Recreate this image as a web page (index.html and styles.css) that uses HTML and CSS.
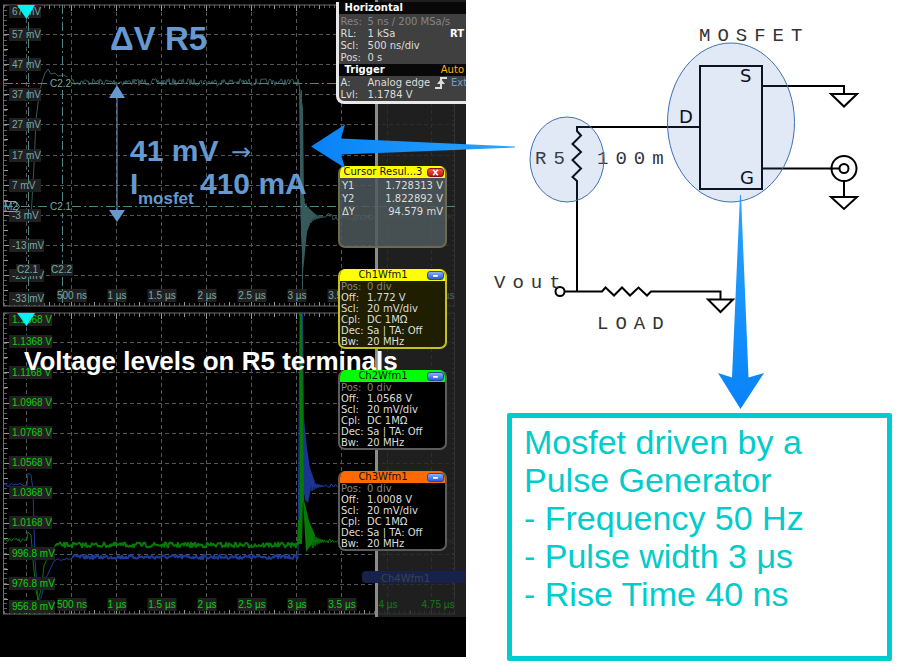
FILE: index.html
```html
<!DOCTYPE html>
<html lang="en">
<head>
<meta charset="utf-8">
<title>Mosfet pulse measurement</title>
<link rel="stylesheet" href="styles.css">
</head>
<body>
<main class="page">
  <section class="scope" aria-label="Oscilloscope">
    <svg class="scope-plots" viewBox="0 0 466 657">
      <rect class="screen" width="466" height="657"/>
      <g id="grids"></g>
      <g id="traces"></g>
      <rect class="shade" x="378" y="0" width="88" height="617"/>
      <rect class="divider" x="375" y="0" width="3" height="617"/>
      <g class="ghost">
        <rect x="362" y="571" width="110" height="12" rx="4"/>
        <text x="381" y="582">Ch4Wfm1</text>
      </g>
      <g id="axis-labels"></g>
      <g class="cursors">
        <path d="M28.500 5V306M62.500 5V306"/>
        <path d="M4 83.500H455M4 206.500H455"/>
      </g>
      <g class="cursor-tags">
        <rect class="tag-bg" x="48" y="77" width="23" height="13"/><text x="50" y="87">C2.2</text>
        <rect class="tag-bg" x="48" y="201" width="23" height="12"/><text x="50" y="210">C2.1</text>
        <rect class="chip" x="16" y="264" width="24" height="12"/><text x="17" y="273">C2.1</text>
        <rect class="chip" x="51" y="264" width="22" height="12"/><text x="51" y="273">C2.2</text>
        <path class="channel-tag" d="M4 201.500H16L19.500 206.500L16 211.500H4"/><text x="4" y="210">M2</text>
      </g>
      <path class="marker" d="M17 5H35L26.500 19Z"/>
      <path class="marker" d="M17 313H35L26.500 326Z"/>
      <g class="notes">
        <path class="span-line" d="M117 94V212"/>
        <path d="M117 85L125 98H109ZM117 222L125 210H109Z"/>
        <text class="note-title" x="110" y="50">ΔV R5</text>
        <text class="note" x="130" y="161">41 mV</text>
        <text class="note-arrow" x="231" y="160">→</text>
        <text class="note" x="130" y="194">I</text>
        <text class="note-sub" x="138" y="204">mosfet</text>
        <text class="note" x="200" y="194">410 mA</text>
      </g>
      <text class="caption" x="24" y="370">Voltage levels on R5 terminals</text>
    </svg>

    <div class="setup">
      <h2>Horizontal</h2>
      <dl class="values">
        <dt class="dim">Res:</dt><dd class="dim">5 ns / 200 MSa/s</dd>
        <dt>RL:</dt><dd class="split"><span>1 kSa</span><b>RT</b></dd>
        <dt>Scl:</dt><dd>500 ns/div</dd>
        <dt>Pos:</dt><dd>0 s</dd>
      </dl>
      <h2 class="split"><span>Trigger</span><span class="auto">Auto</span></h2>
      <dl class="values trigger">
        <dt>A:</dt><dd class="split"><span>Analog edge</span><svg class="edge" viewBox="0 0 12 12"><path d="M0 11H6V1H12"/><path class="edge-head" d="M2 7L6 2L10 7Z"/></svg><span class="ext">Ext</span></dd>
        <dt>Lvl:</dt><dd>1.1784 V</dd>
      </dl>
    </div>

    <div class="panels">
      <article class="panel cursor">
        <header><h3>Cursor Resul...3</h3><button class="close" type="button" aria-label="Close"><svg viewBox="0 0 16 9"><path d="M5 1L11 8M11 1L5 8"/></svg></button></header>
        <dl class="results">
          <dt>Y1</dt><dd>1.728313 V</dd>
          <dt>Y2</dt><dd>1.822892 V</dd>
          <dt>ΔY</dt><dd>94.579 mV</dd>
        </dl>
      </article>
      <article class="panel ch1">
        <header><h3>Ch1Wfm1</h3><button type="button" aria-label="Minimise"><svg viewBox="0 0 16 9"><path d="M5 5H11"/></svg></button></header>
        <dl class="values">
          <dt class="dim">Pos:</dt><dd class="dim">0 div</dd><dt>Off:</dt><dd>1.772 V</dd><dt>Scl:</dt><dd>20 mV/div</dd><dt>Cpl:</dt><dd>DC 1MΩ</dd><dt>Dec:</dt><dd>Sa | TA: Off</dd><dt>Bw:</dt><dd>20 MHz</dd>
        </dl>
      </article>
      <article class="panel ch2">
        <header><h3>Ch2Wfm1</h3><button type="button" aria-label="Minimise"><svg viewBox="0 0 16 9"><path d="M5 5H11"/></svg></button></header>
        <dl class="values">
          <dt class="dim">Pos:</dt><dd class="dim">0 div</dd><dt>Off:</dt><dd>1.0568 V</dd><dt>Scl:</dt><dd>20 mV/div</dd><dt>Cpl:</dt><dd>DC 1MΩ</dd><dt>Dec:</dt><dd>Sa | TA: Off</dd><dt>Bw:</dt><dd>20 MHz</dd>
        </dl>
      </article>
      <article class="panel ch3">
        <header><h3>Ch3Wfm1</h3><button type="button" aria-label="Minimise"><svg viewBox="0 0 16 9"><path d="M5 5H11"/></svg></button></header>
        <dl class="values">
          <dt class="dim">Pos:</dt><dd class="dim">0 div</dd><dt>Off:</dt><dd>1.0008 V</dd><dt>Scl:</dt><dd>20 mV/div</dd><dt>Cpl:</dt><dd>DC 1MΩ</dd><dt>Dec:</dt><dd>Sa | TA: Off</dd><dt>Bw:</dt><dd>20 MHz</dd>
        </dl>
      </article>
    </div>
  </section>

  <section class="circuit" aria-label="Circuit">
    <svg class="schematic" viewBox="466 0 434 413">
      <g class="wires">
        <rect x="700" y="66" width="62" height="123"/>
        <path d="M700 127H577V131L581 135.500L572.500 144L581 152L572.500 160L581 168.500L572.500 177L577 181V291.500"/>
        <path d="M564.500 291.500H602L605.500 287.500L614 295.500L622 287.500L630 295.500L638.500 287.500L647 295.500L651 291.500H720.500V299"/>
        <circle cx="560" cy="291.500" r="4.500"/>
        <path d="M708 299.500H733L720.500 312Z"/>
        <path d="M762 86H844V94M831 94H857L844 106.500Z"/>
        <path d="M762 168.500H840M844 181V197M831 197H857L844 209Z"/>
        <circle cx="844" cy="168.500" r="12.500"/>
        <circle cx="844" cy="168.500" r="4.500"/>
      </g>
      <g class="pins">
        <text x="740" y="82">S</text><text x="679" y="123">D</text><text x="740" y="184">G</text>
      </g>
      <g class="names">
        <text x="699" y="41">MOSFET</text>
        <text x="535" y="164">R5</text>
        <text x="597" y="164">100m</text>
        <text x="494" y="288">Vout</text>
        <text x="597" y="329">LOAD</text>
      </g>
      <g class="highlights">
        <ellipse cx="567" cy="159.500" rx="37" ry="42.500"/>
        <ellipse cx="731" cy="122.500" rx="63.500" ry="79.500"/>
      </g>
    </svg>
    <div class="summary">
      <p>Mosfet driven by a Pulse Generator</p>
      <ul>
        <li>- Frequency 50 Hz</li>
        <li>- Pulse width 3 μs</li>
        <li>- Rise Time 40 ns</li>
      </ul>
    </div>
  </section>

  <svg class="arrows" viewBox="0 0 900 668" aria-hidden="true">
    <defs>
      <linearGradient id="down" x1="0" y1="0" x2="0" y2="1"><stop offset="0" stop-color="#28a4ff"/><stop offset="1" stop-color="#0882f7"/></linearGradient>
      <linearGradient id="left" x1="1" y1="0" x2="0" y2="0"><stop offset="0" stop-color="#28a4ff"/><stop offset="1" stop-color="#0882f7"/></linearGradient>
    </defs>
    <path fill="url(#left)" d="M515 146.500L341 138.500L345 124.500L311 146.500L345 168L341 154.500L515 147.500Z"/>
    <path fill="url(#down)" d="M740 195L732 377.500L718 373L740.500 409L764 373L748.500 377.500L741 195Z"/>
  </svg>
</main>
<script src="script.js"></script>
</body>
</html>
```
FILE: styles.css
```css
* { box-sizing: border-box; }
body { margin: 0; background: #fff; font-family: "Liberation Sans", Arial, sans-serif; }
h2, h3, p, ul, dl, dd { margin: 0; padding: 0; }
ul { list-style: none; }

.page { position: relative; display: grid; grid-template-columns: 466fr 434fr; align-items: start; }
.scope { position: relative; overflow: hidden; }
.scope-plots, .schematic { display: block; width: 100%; }
.arrows { position: absolute; top: 0; left: 0; width: 100%; pointer-events: none; }

/* plots */
.screen { fill: #000; }
.shade { fill: #262626; fill-opacity: 0.82; }
.divider { fill: #8c8c8c; }
.grid { fill: none; stroke: #555; stroke-dasharray: 4 3; }
.frame { fill: none; stroke: #6c6c6c; }
.ticks { fill: none; stroke: #5c5c5c; stroke-width: 3; stroke-dasharray: 1 4; }
.major-ticks { stroke: #999; fill: none; }
.trace { fill: none; stroke-width: 1; stroke-linejoin: round; }
.thick { stroke-width: 2; }
.teal { stroke: #365a5a; }
.green { stroke: #067a06; }
.blue { stroke: #1b3c9e; }
.teal-fill { fill: #365a5a; }
.green-fill { fill: #067a06; }
.blue-fill { fill: #1b3590; }
.chip { fill: #202020; }
.axis { font-size: 10px; }
.axis-teal { fill: #79aaa7; }
.axis-green { fill: #0ad00a; }
.faded { opacity: 0.5; }
.cursors { fill: none; stroke: #4f8584; stroke-dasharray: 9 3 2 3; }
.cursor-tags { font-size: 10px; fill: #79aaa7; }
.tag-bg { fill: #000; }
.channel-tag { fill: none; stroke: #79aaa7; }
.marker { fill: #00f4f4; }
.ghost rect { fill: #16224a; }
.ghost text { fill: #3d4150; font: 10px "DejaVu Sans", sans-serif; }

/* notes over the plots */
.notes { fill: #6699d0; font-weight: bold; }
.span-line { stroke: #6699d0; stroke-width: 1; }
.note-title { font-size: 33px; }
.note { font-size: 30px; }
.note-sub { font-size: 17px; }
.note-arrow { font: 24px "DejaVu Sans", sans-serif; }
.caption { font-size: 26px; font-weight: bold; fill: #fff; }

/* readout panels */
.setup, .panel { font: 10px/11px "DejaVu Sans", Verdana, sans-serif; color: #ddd; }
.setup { position: absolute; top: 2px; left: 72%; right: 0; border: 2px solid #e8e8e8; border-width: 0 0 3px 3px; border-radius: 0 0 0 8px; background: #404040; overflow: hidden; white-space: nowrap; }
.setup h2 { padding: 0 2px 0 6px; background: #080808; font-size: 10px; line-height: 12px; color: #fff; }
.setup .values { grid-template-columns: 27px 1fr; padding: 2px 0 0 2px; line-height: 12px; }
.setup .trigger { padding: 1px 0 0 2px; }
.split { display: flex; justify-content: space-between; }
.split b { color: #fff; padding-right: 2px; }
.auto { color: #ffb400; font-weight: normal; }
.edge { width: 12px; height: 12px; margin: 0 2px 0 3px; flex: none; }
.edge path { fill: none; stroke: #ddd; stroke-width: 2; }
.edge .edge-head { fill: #ddd; stroke: none; }
.ext { color: #6f9fc8; width: 15px; }
.values { display: grid; grid-template-columns: 26px 1fr; padding: 0 0 0 1px; white-space: nowrap; }
.dim { color: #858585; }

.panels { position: absolute; top: 166px; left: 338px; width: 109px; display: flex; flex-direction: column; gap: 21px; }
.panel { border: 2px solid #5c5c5c; border-top: 0; border-radius: 7px; background: #000; overflow: hidden; }
.panel header { display: flex; align-items: center; height: 12px; margin: 0 -2px; padding: 0 3px 0 1px; color: #111; }
.panel h3 { flex: 1; font-size: 10px; font-weight: normal; line-height: 12px; text-align: center; white-space: nowrap; }
.panel button { width: 17px; height: 9px; padding: 0; border: 1px solid #244a9c; border-radius: 3px; background: linear-gradient(#8ab0f6, #2a5be0); display: flex; }
.panel button svg { width: 100%; height: 100%; stroke: #fff; stroke-width: 2; fill: none; }
.panel .close { border-color: #8a1010; background: linear-gradient(#ee5a4c, #c01414); }
.ch1 { border-color: #c4c020; background: #1f1e00; }
.ch1 header, .cursor header { background: #ffff00; }
.ch2 header { background: #00ff00; }
.ch3 header { background: #ff6a00; }
.cursor { border-color: #6c6a4c; background: rgba(78, 88, 91, 0.85); }
.results { display: grid; grid-template-columns: auto 1fr; padding: 1px 2px 28px; line-height: 13px; }
.results dd { text-align: right; }

/* circuit */
.wires { fill: none; stroke: #000; stroke-width: 2; }
.pins { font: 18px "DejaVu Sans", sans-serif; }
.names { font: 19px "Liberation Mono", monospace; letter-spacing: 7px; fill: #333; }
.highlights { fill: #4472c4; fill-opacity: 0.16; stroke: #3f70b4; stroke-width: 1; }
.summary { margin: 0 8px 0 41px; padding: 5px 12px 43px; border: 5px solid #00cccc; border-radius: 2px; color: #00cccc; font-size: 34px; line-height: 38px; }
```
FILE: script.js
```js
const NS = "http://www.w3.org/2000/svg";
const byId = (id) => document.getElementById(id);

function add(parent, name, attrs, text) {
  const el = document.createElementNS(NS, name);
  for (const key in attrs) el.setAttribute(key, attrs[key]);
  if (text) el.textContent = text;
  parent.appendChild(el);
  return el;
}

// Seeded noise, so that the traces are the same on every load.
let seed = 7;
function noise() {
  seed = (seed * 16807) % 2147483647;
  return seed / 2147483647 - 0.5;
}

const columns = [26, 71, 116, 161, 206, 251, 296, 341, 387, 431];

function grid(top, bottom, rows) {
  const g = byId("grids");
  const lines = columns.map((x) => `M${x + 0.5} ${top}V${bottom}`).join("") + rows.map((y) => `M4 ${y + 0.5}H455`).join("");
  add(g, "path", { class: "grid", d: lines });
  add(g, "path", { class: "ticks", d: `M4 ${top + 1.5}H455M4 ${bottom - 1.5}H455M5.5 ${top}V${bottom}M453.5 ${top}V${bottom}` });
  add(g, "path", { class: "major-ticks", d: columns.map((x) => `M${x + 0.5} ${top}v6M${x + 0.5} ${bottom}v-6M${x + 23.5} ${top}v4M${x + 23.5} ${bottom}v-4`).join("") + rows.map((y) => `M4 ${y + 0.5}h6M4 ${y + 15.5}h4`).join("") });
  add(g, "rect", { class: "frame", x: 3.5, y: top, width: 451, height: bottom - top });
}

function noisy(from, to, y, amount) {
  let d = "";
  for (let x = from; x <= to; x++) d += `L${x} ${(y + noise() * amount).toFixed(1)}`;
  return d;
}

function ring(from, to, y, size) {
  let d = "";
  for (let x = from, s = 1; x <= to; x++, s = -s) d += `L${x} ${y + s * size * Math.exp((from - x) / 6)}`;
  return d;
}

function trace(color, d) {
  add(byId("traces"), "path", { class: `trace ${color}`, d });
}

function label(color, text, x, middle, width, centred, faded) {
  const g = add(byId("axis-labels"), "g", { class: `axis axis-${color}${faded ? " faded" : ""}` });
  add(g, "rect", { class: "chip", x: centred ? x - width / 2 : 9, y: middle - 7, width, height: 13 });
  add(g, "text", { x, y: middle + 3, "text-anchor": centred ? "middle" : "start" }, text);
}

grid(5, 306, [34, 64, 94, 124, 155, 185, 215, 245, 275]);
grid(313, 614, [342, 372, 403, 433, 463, 493, 523, 554, 584]);

trace("teal", "M9 217" + noisy(10, 31, 216, 6) + "L34 165L36 120L39 95L42 82L45 73L48 69L51 74L55 73L58 76L64 75L72 80" + noisy(73, 298, 82, 7) + "L300 90L301 216" + ring(303, 325, 217, 22) + noisy(326, 455, 217, 7));
trace("teal", "M301.5 90V230M302.5 108V290");
add(byId("traces"), "path", { class: "teal-fill", d: "M299 84L303 108L304 202L306 206L311 210L316 215L311 221L307 232L303 272L301 235Z" });
trace("blue", "M4 485" + noisy(5, 27, 485, 3) + "L28 473L31 475L33 490L35 560L38 600L41 598L46 578L54 561" + noisy(58, 72, 559, 3));
trace("blue thick", "M72 558" + noisy(73, 298, 557, 4));
trace("blue", "M298 557L300 313");
add(byId("traces"), "path", { class: "blue-fill", d: "M301 313H303L304 418L307 448L310 468L315 482L311 488L308 503L305 500L302 480Z" });
trace("blue", "M312 487" + ring(312, 325, 486, 5) + noisy(326, 455, 486, 4));
trace("green", "M4 540" + noisy(5, 27, 540, 4) + "L28 532L31 535L33 560L36 590L38 600L41 590L44 566L49 554L55 546");
trace("green thick", "M55 546" + noisy(57, 298, 545, 5) + "L299 520");
add(byId("traces"), "path", { class: "green-fill", d: "M300 313H302L304 500L309 521L315 535L312 544L308 549L306 552L303 500L302 544H299Z" });
trace("green", "M312 541" + ring(313, 325, 541, 7) + noisy(326, 455, 541, 4));

[["67 mV", 12], ["57 mV", 35], ["47 mV", 65], ["37 mV", 95], ["27 mV", 125], ["17 mV", 156], ["7 mV", 186], ["-3 mV", 216], ["-13 mV", 246], ["-23 mV", 276], ["-33 mV", 299]]
  .forEach(([text, y]) => label("teal", text, 12, y, text.length > 5 ? 35 : 32));
[["1.1568 V", 320], ["1.1368 V", 342], ["1.1168 V", 373], ["1.0968 V", 403], ["1.0768 V", 433], ["1.0568 V", 463], ["1.0368 V", 493], ["1.0168 V", 523], ["996.8 mV", 554], ["976.8 mV", 584], ["956.8 mV", 607]]
  .forEach(([text, y]) => label("green", text, 12, y, text.endsWith("mV") ? 46 : 43));
[["500 ns", 72], ["1 µs", 117], ["1.5 µs", 162], ["2 µs", 207], ["2.5 µs", 252], ["3 µs", 297], ["3.5 µs", 342], ["4 µs", 388], ["4.75 µs", 438]]
  .forEach(([text, x]) => {
    const width = text.length * 5 - 1;
    // The channel panel covers the upper plot's label at 4 µs.
    if (x !== 388) label("teal", text, x, 296, width, true, x > 378);
    label("green", text, x, 605, width, true, x > 378);
  });
```
